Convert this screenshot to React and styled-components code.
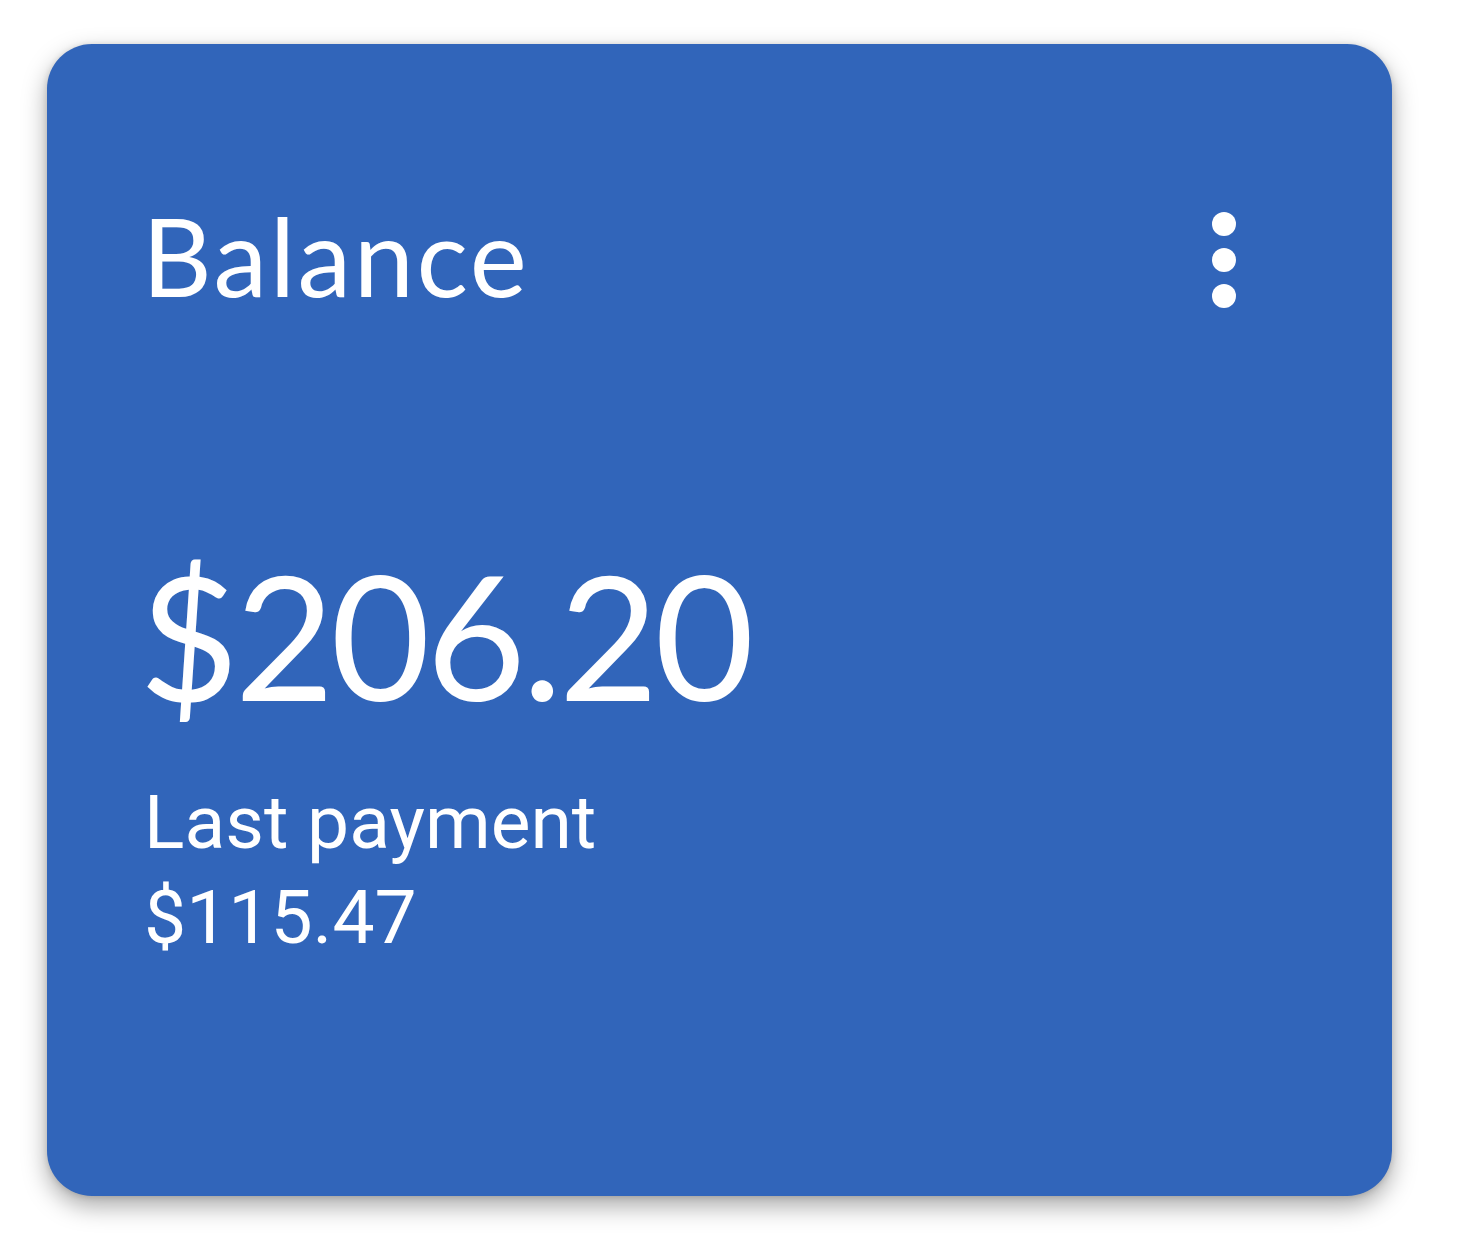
import React from 'react';
import styled, { createGlobalStyle } from 'styled-components';

const GlobalStyle = createGlobalStyle`
  body {
    margin: 0;
    background: #ffffff;
    font-family: 'Roboto', 'Liberation Sans', sans-serif;
  }
`;

const Page = styled.div`
  padding: 44px 0 40px 47px;
`;

const Card = styled.div`
  box-sizing: border-box;
  width: 1345px;
  height: 1152px;
  padding: 144px 96px 0 95px;
  background: #3165ba;
  border-radius: 45px;
  box-shadow: 0 10px 24px rgba(0, 0, 0, 0.34), 0 1px 6px rgba(0, 0, 0, 0.14);
  color: #ffffff;
  display: flex;
  flex-direction: column;
`;

const Header = styled.div`
  display: flex;
  align-items: center;
  justify-content: space-between;
  height: 144px;
`;

const Title = styled.div`
  font-family: 'Lato', 'Open Sans', sans-serif;
  font-weight: 400;
  font-size: 108px;
  letter-spacing: 2.5px;
  line-height: 1;
  padding-bottom: 10px;
`;

const MenuButton = styled.button`
  border: 0;
  padding: 0;
  background: none;
  width: 144px;
  height: 144px;
  display: flex;
  align-items: center;
  justify-content: center;
  color: #ffffff;
  cursor: pointer;
`;

const Amount = styled.div`
  margin: 217px 0 0 -3px;
  font-family: 'Lato', 'Open Sans', sans-serif;
  font-weight: 400;
  font-size: 172px;
  letter-spacing: -4px;
  line-height: 1;
`;

const Details = styled.div`
  margin: 54px 0 0 2px;
  font-size: 75px;
  line-height: 95px;
`;

const MoreVert = () => (
  <svg width="144" height="144" viewBox="0 0 24 24" fill="currentColor">
    <circle cx="12" cy="6" r="2" />
    <circle cx="12" cy="12" r="2" />
    <circle cx="12" cy="18" r="2" />
  </svg>
);

export default function App() {
  return (
    <Page>
      <GlobalStyle />
      <Card>
        <Header>
          <Title>Balance</Title>
          <MenuButton aria-label="More options">
            <MoreVert />
          </MenuButton>
        </Header>
        <Amount>$206.20</Amount>
        <Details>
          <div>Last payment</div>
          <div>$115.47</div>
        </Details>
      </Card>
    </Page>
  );
}
